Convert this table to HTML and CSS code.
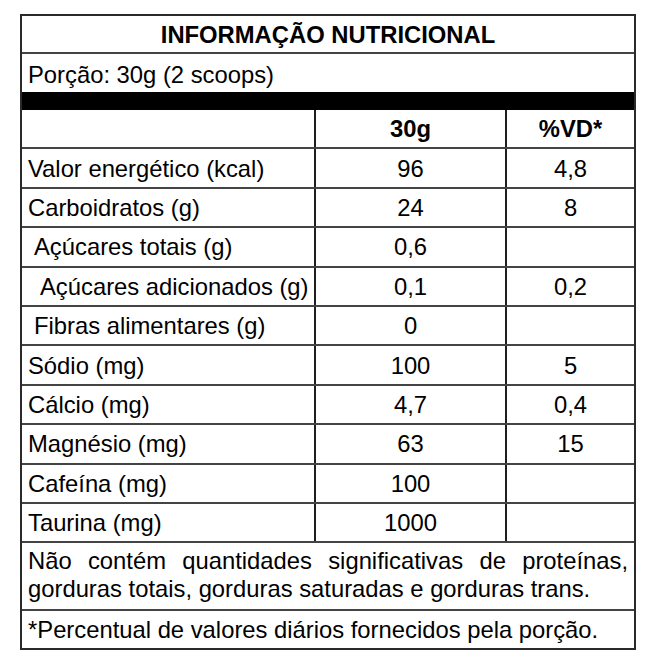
FILE: index.html
```html
<!DOCTYPE html>
<html lang="pt-BR">
<head>
<meta charset="utf-8">
<title>Informação Nutricional</title>
<link rel="stylesheet" href="styles.css">
</head>
<body>
<div class="label">
  <div class="title">INFORMAÇÃO NUTRICIONAL</div>
  <div class="portion">Porção: 30g (2 scoops)</div>
  <div class="bar"></div>
  <div class="row head">
    <div class="cell name"></div>
    <div class="cell val">30g</div>
    <div class="cell vd">%VD*</div>
  </div>
  <div class="row">
    <div class="cell name">Valor energético (kcal)</div>
    <div class="cell val">96</div>
    <div class="cell vd">4,8</div>
  </div>
  <div class="row">
    <div class="cell name">Carboidratos (g)</div>
    <div class="cell val">24</div>
    <div class="cell vd">8</div>
  </div>
  <div class="row">
    <div class="cell name indent1">Açúcares totais (g)</div>
    <div class="cell val">0,6</div>
    <div class="cell vd"></div>
  </div>
  <div class="row">
    <div class="cell name indent2">Açúcares adicionados (g)</div>
    <div class="cell val">0,1</div>
    <div class="cell vd">0,2</div>
  </div>
  <div class="row">
    <div class="cell name indent1">Fibras alimentares (g)</div>
    <div class="cell val">0</div>
    <div class="cell vd"></div>
  </div>
  <div class="row">
    <div class="cell name">Sódio (mg)</div>
    <div class="cell val">100</div>
    <div class="cell vd">5</div>
  </div>
  <div class="row">
    <div class="cell name">Cálcio (mg)</div>
    <div class="cell val">4,7</div>
    <div class="cell vd">0,4</div>
  </div>
  <div class="row">
    <div class="cell name">Magnésio (mg)</div>
    <div class="cell val">63</div>
    <div class="cell vd">15</div>
  </div>
  <div class="row">
    <div class="cell name">Cafeína (mg)</div>
    <div class="cell val">100</div>
    <div class="cell vd"></div>
  </div>
  <div class="row">
    <div class="cell name">Taurina (mg)</div>
    <div class="cell val">1000</div>
    <div class="cell vd"></div>
  </div>
  <div class="note">Não contém quantidades significativas de proteínas, gorduras totais, gorduras saturadas e gorduras trans.</div>
  <div class="foot">*Percentual de valores diários fornecidos pela porção.</div>
</div>
</body>
</html>
```

FILE: styles.css
```css
html, body {
  margin: 0;
  padding: 0;
  background: #ffffff;
}

body {
  font-family: "Liberation Sans", Arial, sans-serif;
  font-size: 23.8px;
  color: #000000;
}

.label {
  margin: 14px 0 0 20px;
  width: 616px;
  box-sizing: border-box;
  border: 2px solid #2a2a2a;
}

.title {
  height: 38px;
  box-sizing: border-box;
  border-bottom: 2px solid #444444;
  display: flex;
  align-items: center;
  justify-content: center;
  font-weight: bold;
  padding-top: 2px;
}

.portion {
  height: 38px;
  box-sizing: border-box;
  display: flex;
  align-items: center;
  padding: 3px 0 0 6px;
}

.bar {
  height: 18px;
  background: #000000;
}

.row {
  display: grid;
  grid-template-columns: 292px 191px 1fr;
  height: 39.4px;
  box-sizing: border-box;
  border-bottom: 2px solid #444444;
}

.cell {
  display: flex;
  align-items: center;
  white-space: nowrap;
  padding-top: 1px;
}

.val, .vd {
  justify-content: center;
  border-left: 2px solid #1e1e1e;
}

.name {
  padding-left: 6px;
}

.indent1 {
  padding-left: 12px;
}

.indent2 {
  padding-left: 18px;
}

.head {
  font-weight: bold;
}

.note {
  height: 68px;
  box-sizing: border-box;
  border-bottom: 2px solid #444444;
  padding: 4px 6px 0 6px;
  line-height: 28px;
  text-align: justify;
}

.foot {
  height: 37px;
  box-sizing: border-box;
  display: flex;
  align-items: center;
  padding: 1px 0 0 6px;
}
```
